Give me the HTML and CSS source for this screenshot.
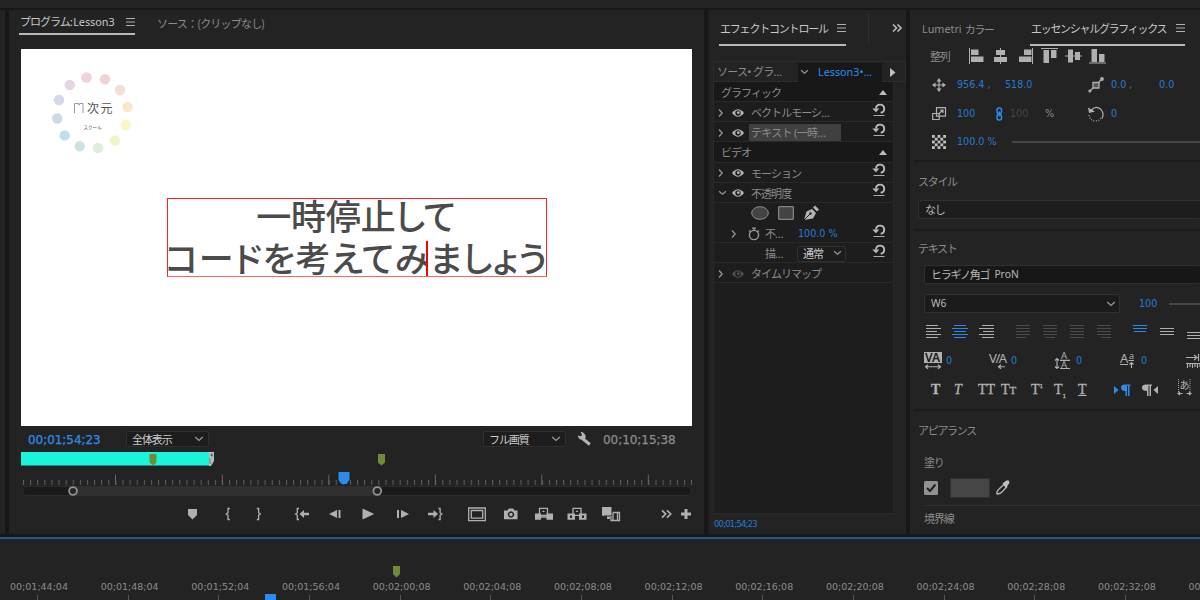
FILE: index.html
```html
<!DOCTYPE html>
<html lang="ja">
<head>
<meta charset="utf-8">
<title>Lesson3</title>
<link rel="stylesheet" href="styles.css">
</head>
<body>
<svg class="defs" width="0" height="0">
  <defs>
    <symbol id="chev" viewBox="0 0 10 6"><path d="M1.2 1 5 4.4 8.8 1" fill="none" stroke="#999" stroke-width="1.3"/></symbol>
    <symbol id="right" viewBox="0 0 6 10"><path d="M1 1.500 4.200 5 1 8.500" fill="none" stroke="#999" stroke-width="1.200"/></symbol>
    <symbol id="menu" viewBox="0 0 9 8"><path d="M0 .5h9M0 4h9M0 7.500h9" stroke="#b0b0b0" stroke-width="1"/></symbol>
    <symbol id="more" viewBox="0 0 11 8"><path d="M1 .5 4.500 4 1 7.500M5.500.5 9 4 5.500 7.500" fill="none" stroke="#b4b4b4" stroke-width="1.700"/></symbol>
    <symbol id="eye" viewBox="0 0 12 8"><path d="M0 4Q6-3.500 12 4 6 11.500 0 4Z" fill="currentColor"/><circle cx="6" cy="4" r="2.700" fill="#1d1d1d"/><circle cx="6.300" cy="3.700" r="1.400" fill="currentColor"/></symbol>
    <symbol id="reset" viewBox="0 0 14 14"><path d="M4 5.500A4.100 4.100 0 1 1 8.700 9.800" fill="none" stroke="#bbb" stroke-width="1.900"/><path d="M.3 5.600h7L4 9.200Z" fill="#bbb"/><path d="M1.500 12.500h11" stroke="#aaa" stroke-width="1"/></symbol>
    <symbol id="up" viewBox="0 0 8 5"><path d="M0 5 4 0 8 5Z" fill="#bbb"/></symbol>
    <symbol id="pin" viewBox="0 0 7 12"><path d="M0 0h7v8L3.500 11.500 0 8Z" fill="#728a36"/></symbol>
  </defs>
</svg>

<div class="topbar"></div>
<main class="workspace">
  <div class="edge"></div>

  <section class="panel program">
    <header class="tabs">
      <div class="tab active"><span class="t-program">プログラム: <span class="lat">Lesson3</span></span><svg width="9" height="8"><use href="#menu"/></svg></div>
      <div class="tab t-source">ソース：(クリップなし)</div>
    </header>

    <div class="monitor">
      <svg class="logo" width="84" height="84" viewBox="50 70 84 84">
        <circle cx="86.500" cy="77.500" r="5.200" fill="#efd3da"/><circle cx="105" cy="79.300" r="5.200" fill="#f2d3d5"/>
        <circle cx="120" cy="90" r="5.200" fill="#f6ddd4"/><circle cx="127.600" cy="107" r="5.200" fill="#f8e7c8"/>
        <circle cx="125.800" cy="125.300" r="5.200" fill="#fbf7c5"/><circle cx="115" cy="140.500" r="5.200" fill="#eef4cc"/>
        <circle cx="98" cy="148" r="5.200" fill="#e0edd8"/><circle cx="79.700" cy="146.200" r="5.200" fill="#cde4de"/>
        <circle cx="64.700" cy="135.400" r="5.200" fill="#c1dfe9"/><circle cx="57.200" cy="118.500" r="5.200" fill="#c9dae9"/>
        <circle cx="59" cy="100" r="5.200" fill="#d5d7ea"/><circle cx="69.700" cy="85" r="5.200" fill="#e4d5e5"/>
        <path d="M74.500 113v-9.500h3.800v1.500M79.500 105v-1.500h3.500V113" fill="none" stroke="#999" stroke-width="1"/>
        <text x="87" y="112.500" class="logo-name">次元</text>
        <text x="83.500" y="128.600" class="logo-sub">スクール</text>
      </svg>
      <div class="caption"><div class="line1">一時停止して</div><div class="line2">コードを考えてみましょう</div><i class="caret"></i></div>
    </div>

    <div class="monitor-bar">
      <span class="time blue">00;01;54;23</span>
      <div class="select"><span>全体表示</span><svg width="10" height="6"><use href="#chev"/></svg></div>
      <div class="select"><span>フル画質</span><svg width="10" height="6"><use href="#chev"/></svg></div>
      <svg width="16" height="16" viewBox="0 0 16 16"><path d="M5.500 7.500 12.800 13.500" stroke="#b4b4b4" stroke-width="3"/><path d="M3.500.8 5 4 4 5.200.8 4.500Q1.500 9 6.500 9 10 7 8 3.500 6.500.8 3.500.8Z" fill="#b4b4b4"/></svg>
      <span class="time">00;10;15;38</span>
    </div>

    <svg class="clipbar" width="671" height="14">
      <path d="M0 0h188v13.500H0Z" fill="#1af5da"/><path d="M188 0h5v9l-3 5h-2Z" fill="#bdbdbd"/><path d="M190 2h1.500v2H190ZM189 6v6" fill="#333" stroke="#777"/>
      <path d="M128.500 2h7v8.500l-3.500 3-3.500-3Z" fill="#728a36"/><path d="M357 2h7v8.500l-3.500 3-3.500-3Z" fill="#728a36"/>
    </svg>
    <svg class="ruler" width="671" height="14" viewBox="21 472 671 14">
      <defs><pattern id="minor" x="23" width="7.107" height="20" patternUnits="userSpaceOnUse"><path d="M0 0h1v20H0Z" fill="#606060"/></pattern></defs>
      <path d="M23 480h669v5H23Z" fill="url(#minor)"/>
      <path d="M115.500 474.500V485M222.300 474.500V485M328.800 474.500V485M435.300 474.500V485M541.800 474.500V485M648.300 474.500V485" stroke="#666"/>
      <path d="M338.500 472h11v8l-3 4h-5l-3-4Z" fill="#2d8ceb"/>
    </svg>
    <svg class="zoombar" width="671" height="12" viewBox="21 485 671 12">
      <rect x="22.500" y="486.500" width="669" height="9" rx="4.500" fill="#1a1a1a" stroke="#2d2d2d"/><path d="M73 486h304v10H73Z" fill="#303030"/>
      <circle cx="73" cy="491" r="3.900" fill="#252525" stroke="#929292" stroke-width="1.800"/><circle cx="377.300" cy="491" r="3.900" fill="#252525" stroke="#929292" stroke-width="1.800"/>
    </svg>

    <div class="transport">
      <svg viewBox="0 0 24 24"><path d="M8 7h9v6l-4.500 4.500L8 13Z"/></svg>
      <svg viewBox="0 0 24 24"><path class="ln" d="M13.800 6.500H12v4.200L10.300 12 12 13.300v4.200h1.800"/></svg>
      <svg viewBox="0 0 24 24"><path class="ln" d="M10.800 6.500h1.800v4.200l1.700 1.300-1.700 1.300v4.200h-1.800"/></svg>
      <svg viewBox="0 0 24 24"><path class="ln" d="M9 6.500H7.300v4.200L5.600 12l1.700 1.300v4.200H9"/><path d="M9.500 12 14 8v2.800h5v2.400h-5V16Z"/></svg>
      <svg viewBox="0 0 24 24"><path d="M6 12l8-4v8ZM15.500 8h2v8h-2Z"/></svg>
      <svg viewBox="0 0 24 24"><path d="M6.500 6.500 18.300 12 6.500 17.500Z"/></svg>
      <svg viewBox="0 0 24 24"><path d="M6 8h2v8H6ZM10 8l8 4-8 4Z"/></svg>
      <svg viewBox="0 0 24 24"><path d="M15 12l-4.500-4v2.800H5v2.400h5.500V16Z"/><path class="ln" d="M15.500 6.500h1.600v4.200l1.700 1.300-1.700 1.300v4.200h-1.600"/></svg>
      <svg viewBox="0 0 24 24"><path class="ln" d="M3.700 6h16.600v12.600H3.700ZM6.300 8.500h11.400v7.600H6.300Z"/></svg>
      <svg viewBox="0 0 24 24"><path fill-rule="evenodd" d="M5 8.500h3.500L9.800 6.500h4.400l1.300 2H18.500v8.800H5ZM12 9.300a3.200 3.200 0 1 0 .01 0Z"/><circle cx="12" cy="12.500" r="1.700"/></svg>
      <svg viewBox="0 0 24 24"><path class="ln" d="M7.500 6.300h8v7h-8ZM15 15H8"/><path d="M3 11.500h6v6.200H3ZM14.500 11.500H21v6.200h-6.500ZM10 10l1.500-1.800L13 10Z"/></svg>
      <svg viewBox="0 0 24 24"><path class="ln" d="M8 6.300h8v7H8Z"/><path fill-rule="evenodd" d="M2.500 11.500H10v6.200H2.500ZM5 13.500v2.500h2v-2.500ZM14 11.500h7.500v6.200H14ZM17 13.500v2.500h2v-2.500ZM10.500 10 12 8.200l1.500 1.800Z"/></svg>
      <svg viewBox="0 0 24 24"><path d="M3 5h9.500v8.500H3ZM8 14.500h3V17H8Z"/><path class="ln" d="M4.500 5v9M14 10.500h6.500v8H12v-4.500M14 10.500v8M18.500 10.500v8" stroke-width="1"/></svg>
      <svg viewBox="0 0 24 24"><path class="ln chevrons" d="M7 8.300 10.700 12 7 15.700M12 8.300 15.700 12 12 15.700"/></svg>
      <svg viewBox="0 0 24 24"><path d="M10.500 7h3v3.500H17v3h-3.500V17h-3v-3.500H7v-3h3.500Z"/></svg>
    </div>
  </section>

  <section class="panel effects">
    <header class="tabs">
      <div class="tab active"><span>エフェクトコントロール</span><svg width="9" height="8"><use href="#menu"/></svg></div>
      <i class="divider"></i>
      <svg class="overflow" width="11" height="8"><use href="#more"/></svg>
    </header>
    <div class="sourcebar">
      <span class="src">ソース• グラ…</span>
      <span class="clip"><svg width="9" height="6"><use href="#chev"/></svg><span class="lat blue">Lesson3•…</span></span>
      <svg width="6" height="9"><path d="M0 0 5.500 4.500 0 9Z" fill="#c0c0c0"/></svg>
    </div>
    <div class="fx-list">
      <div class="fx head"><span>グラフィック</span><svg width="8" height="5"><use href="#up"/></svg></div>
      <div class="fx"><svg width="6" height="10"><use href="#right"/></svg><svg class="eye" width="12" height="8"><use href="#eye"/></svg><span>ベクトルモーシ…</span><svg class="reset" width="14" height="14"><use href="#reset"/></svg></div>
      <div class="fx"><svg width="6" height="10"><use href="#right"/></svg><svg class="eye" width="12" height="8"><use href="#eye"/></svg><span class="selected">テキスト (一時…</span><svg class="reset" width="14" height="14"><use href="#reset"/></svg></div>
      <div class="fx head"><span>ビデオ</span><svg width="8" height="5"><use href="#up"/></svg></div>
      <div class="fx"><svg width="6" height="10"><use href="#right"/></svg><svg class="eye" width="12" height="8"><use href="#eye"/></svg><span>モーション</span><svg class="reset" width="14" height="14"><use href="#reset"/></svg></div>
      <div class="fx"><svg width="9" height="6"><use href="#chev"/></svg><svg class="eye" width="12" height="8"><use href="#eye"/></svg><span>不透明度</span><svg class="reset" width="14" height="14"><use href="#reset"/></svg></div>
      <div class="fx masks">
        <svg width="18" height="14"><ellipse cx="9" cy="7" rx="8.300" ry="6.300" fill="#434343" stroke="#909090"/></svg>
        <svg width="16" height="14"><path d="M.7.7h14.600v12.600H.7Z" fill="#434343" stroke="#999"/></svg>
        <svg width="16" height="16"><path d="M1 15 3.500 6.500 9 4l4 4-3 5.500Z" fill="#b4b4b4"/><path d="m10 2.500 2-2 4 4-2 2Z" fill="#b4b4b4"/><path d="M1 15 7 9" stroke="#222"/><circle cx="7.500" cy="8.500" r="1.200" fill="#222"/></svg>
      </div>
      <div class="fx prop"><svg width="6" height="10"><use href="#right"/></svg><svg width="12" height="14"><circle cx="6" cy="8" r="4.600" fill="none" stroke="#999" stroke-width="1.400"/><path d="M4 1.200h4M6 1v3M1 3.500l2 1.500M11 3.500 9 5" stroke="#999" stroke-width="1.300"/></svg><span>不…</span><span class="num blue">100.0 %</span><svg class="reset" width="14" height="14"><use href="#reset"/></svg></div>
      <div class="fx prop"><i></i><i></i><span>描…</span><span class="select mini"><span>通常</span><svg width="9" height="6"><use href="#chev"/></svg></span><svg class="reset" width="14" height="14"><use href="#reset"/></svg></div>
      <div class="fx"><svg width="6" height="10"><use href="#right"/></svg><svg class="eye off" width="12" height="8"><use href="#eye"/></svg><span>タイムリマップ</span></div>
    </div>
    <div class="fx-time num blue">00;01;54;23</div>
  </section>

  <section class="panel graphics">
    <header class="tabs">
      <div class="tab"><span class="lat">Lumetri</span> カラー</div>
      <div class="tab active"><span>エッセンシャルグラフィックス</span><svg width="9" height="8"><use href="#menu"/></svg></div>
    </header>
    <div class="row align">
      <span>整列</span>
      <svg viewBox="0 0 18 16"><path d="M1 0h1v16H1ZM3 1.500h7.500v5.500H3ZM3 8.500h12.500V14H3Z"/></svg>
      <svg viewBox="0 0 18 16"><path d="M8 0h1v16H8ZM4 2h9v5H4ZM2 9h13v5H2Z"/></svg>
      <svg viewBox="0 0 18 16"><path d="M15 0h1v16h-1ZM7 1.500h7.500v5.500H7ZM2 8.500h12.500V14H2Z"/></svg>
      <svg viewBox="0 0 18 16"><path d="M0 0h17v1H0ZM2.500 2H8v13H2.500ZM10 2h5.500v8H10Z"/></svg>
      <svg viewBox="0 0 18 16"><path d="M0 7.500h17v1H0ZM3 1.500h5v13H3ZM10 4h5v8h-5Z"/></svg>
      <svg viewBox="0 0 18 16"><path d="M0 14.500h17v1H0ZM2.500 1H8v13H2.500ZM10 6h5.500v8H10Z"/></svg>
    </div>
    <div class="row pos">
      <svg viewBox="0 0 14 14"><path class="ln" d="M7 2v10M2 7h10"/><path d="M7 0 9.500 3.500h-5ZM7 14 4.500 10.500h5ZM0 7l3.500-2.500v5ZM14 7l-3.500 2.500v-5Z"/></svg>
      <span class="num blue">956.4 ,</span><span class="num blue">518.0</span>
      <svg viewBox="0 0 16 16"><path class="ln" d="M2 14 14 2"/><path class="knot" d="M5 5.500h6v5.500H5Z"/><circle cx="1.800" cy="14" r="1.500"/><circle cx="14" cy="2" r="1.900"/></svg>
      <span class="num blue">0.0 ,</span><span class="num blue">0.0</span>
    </div>
    <div class="row scale">
      <svg viewBox="0 0 14 14"><path class="ln" d="M4.500.7h9v8.500h-9ZM.7 6.500h6.500v6H.7Z"/><path class="ln" d="M6.500 7 11 3M8 3h3v3"/></svg>
      <span class="num blue">100</span>
      <svg viewBox="0 0 7 14"><rect x="1" y="1" width="4.500" height="5.500" rx="2" fill="none" stroke="#2d8ceb" stroke-width="1.500"/><rect x="1" y="7.500" width="4.500" height="5.500" rx="2" fill="none" stroke="#2d8ceb" stroke-width="1.500"/><path d="M3.300 4.500v5" stroke="#2d8ceb" stroke-width="1.200"/></svg>
      <span class="num dim">100</span><span class="num">%</span>
      <svg viewBox="0 0 16 16"><path class="ln" d="M3.500 4Q8-.8 13 3.500 16.500 8 14 12.500"/><path d="M0 1.500 1 7l6-1.500Z"/><path class="ln" d="M1 9q1 6 7 6 3 0 5-3" stroke-dasharray="1 1.500"/></svg>
      <span class="num blue">0</span>
    </div>
    <div class="row opacity">
      <svg viewBox="0 0 13 13"><defs><pattern id="chk" width="5.200" height="5.200" patternUnits="userSpaceOnUse"><path d="M0 0h2.600v2.600H0ZM2.600 2.600h2.600v2.600H2.600Z" fill="#c0c0c0"/></pattern></defs><path class="checker" d="M0 0h13v13H0Z"/></svg>
      <span class="num blue">100.0 %</span><i class="track"></i>
    </div>
    <div class="group"><h3>スタイル</h3><div class="field style-field">なし</div></div>
    <div class="group type">
      <h3>テキスト</h3>
      <div class="field font-field">ヒラギノ角ゴ <span class="lat">ProN</span></div>
      <div class="weight"><div class="field"><span class="lat">W6</span><svg width="10" height="6"><use href="#chev"/></svg></div><span class="num blue">100</span><i class="track"></i></div>
      <div class="para">
        <svg viewBox="0 0 16 14"><path d="M1 .5h12M1 3.500h15M1 6.500h11M1 9.500h15M1 12.500h12"/></svg>
        <svg class="on" viewBox="0 0 16 14"><path d="M2 .5h12M0 3.500h16M2 6.500h12M0 9.500h16M2 12.500h12"/></svg>
        <svg viewBox="0 0 16 14"><path d="M3 .5h12M0 3.500h15M4 6.500h11M0 9.500h15M3 12.500h12"/></svg>
        <svg class="off" viewBox="0 0 16 14"><path d="M1 .5h14M1 3.500h14M1 6.500h14M1 9.500h14M1 12.500h10"/></svg>
        <svg class="off" viewBox="0 0 16 14"><path d="M1 .5h14M1 3.500h14M1 6.500h14M1 9.500h14M3 12.500h10"/></svg>
        <svg class="off" viewBox="0 0 16 14"><path d="M1 .5h14M1 3.500h14M1 6.500h14M1 9.500h14M1 12.500h14"/></svg>
        <svg class="off" viewBox="0 0 16 14"><path d="M1 .5h14M1 3.500h14M1 6.500h14M1 9.500h14M5 12.500h10"/></svg>
        <svg class="on" viewBox="0 0 16 14"><path d="M1 .5h14M1 3.500h14M2 6.500h12"/></svg>
        <svg viewBox="0 0 16 14"><path d="M1 3.500h14M1 6.500h14M1 9.500h14"/></svg>
        <svg viewBox="0 0 16 14"><path d="M1 7.500h14M1 10.500h14M1 13.500h14"/></svg>
      </div>
      <div class="metrics">
        <svg viewBox="0 0 20 18"><path d="M0 0h18v11H0Z"/><text x="1" y="9.700" class="va inv">VA</text><path class="ln" d="M2 14.700h14M4 12.700l-2.500 2L4 16.700M14 12.700l2.500 2-2.500 2"/></svg><span class="num blue">0</span>
        <svg viewBox="0 0 20 18"><text x="0" y="10.500" class="va wide tight">V/A</text><path class="ln" d="M16 14.700H9.500M12 12.700l-2.500 2 2.500 2"/></svg><span class="num blue">0</span>
        <svg viewBox="0 0 20 18"><text x="7" y="7" class="va mid">A</text><text x="7" y="15.500" class="va mid">A</text><path class="ln" d="M6 8.300h10M6 16.500h10M3 7v9M1 8.500 3 6.500l2 2M1 14.500l2 2 2-2"/></svg><span class="num blue">0</span>
        <svg viewBox="0 0 20 18"><text x="1" y="10.500" class="va wide">A</text><text x="10" y="7" class="small">a</text><path class="ln" d="M1 12.500h8M9.500 8.500H15M12.500 16v-5M10.500 12.500l2-2 2 2"/></svg><span class="num blue">0</span>
        <svg viewBox="0 0 20 18"><path class="ln" d="M0 5.500h10M8 3l3 2.500L8 8M12.500 2v7M0 11.500h15M1.500 11v5M4 11v4M6.500 11v5M9 11v4M11.500 11v5M14 11v4"/></svg>
      </div>
      <div class="styles">
        <b>T</b><em>T</em><span>TT</span><span>T<small>T</small></span><span>T<sup>1</sup></span><span>T<sub>1</sub></span><u>T</u>
        <svg class="on" viewBox="0 0 18 14"><path d="M1 3l4.500 4L1 11ZM12 1.500h5.500v1.200h-1V13H15V2.700h-1V13h-1.500V8Q8 8 8 4.800q0-3.300 4-3.300Z"/></svg>
        <svg viewBox="0 0 18 14"><path d="M17 3 12.500 7l4.500 4ZM5 1.500h6v1.200h-1V13H8.500V2.700h-1V13H6V8Q1 8 1 4.800q0-3.300 4-3.300Z"/></svg>
        <svg viewBox="0 0 16 18"><text x="2.500" y="9.500" class="kana">あ</text><path d="M1.500 0v13M13 0v13" stroke="#aaa" stroke-dasharray="1 1"/><path class="ln thin" d="M5.500 14.500H1M3 12.800l-2 1.700 2 1.700M9.500 14.500H14M12 12.800l2 1.700-2 1.700"/></svg>
      </div>
    </div>
    <div class="group look">
      <h3>アピアランス</h3>
      <p>塗り</p>
      <div class="fill">
        <svg width="14" height="14"><rect width="14" height="14" rx="1.500" fill="#929292"/><path d="m3 7 3 3 5.500-6.500" fill="none" stroke="#202020" stroke-width="2"/></svg>
        <i class="swatch"></i>
        <svg width="16" height="16"><path d="M2 14q-.5-3 2-5l5-4.500 2.500 2.500L7 12q-2 2-5 2Z" fill="#222" stroke="#b4b4b4" stroke-width="1.300"/><path d="m7.500 3 1.500-.5L11 .8Q14-.5 14.500 2q0 1.500-2 3.500l-.5 2-1 1Z" fill="#c0c0c0"/></svg>
      </div>
      <p class="stroke-row">境界線</p>
    </div>
  </section>
</main>

<footer class="timeline">
  <svg class="tl-marker" width="7" height="12"><use href="#pin"/></svg>
  <div class="labels">
    <span>00;01;44;04</span><span>00;01;48;04</span><span>00;01;52;04</span><span>00;01;56;04</span><span>00;02;00;08</span><span>00;02;04;08</span><span>00;02;08;08</span><span>00;02;12;08</span><span>00;02;16;08</span><span>00;02;20;08</span><span>00;02;24;08</span><span>00;02;28;08</span><span>00;02;32;08</span><span>00</span>
  </div>
  <i class="playhead"></i>
</footer>
</body>
</html>
```
FILE: styles.css
```css
* { box-sizing: border-box; }
body {
  margin: 0; width: 1200px; height: 600px; overflow: hidden;
  background: #171717; color: #8c8c8c;
  font: 11px/20px "Noto Sans CJK JP", sans-serif;
  letter-spacing: -1.2px; white-space: nowrap;
}
svg { display: block; flex: none; overflow: visible; }
i { display: block; }
h3, p { margin: 0; font: inherit; }
.defs { position: absolute; }
.lat { font-family: "Noto Sans", sans-serif; font-size: 10.8px; letter-spacing: 0; }
.num { font-family: "DejaVu Sans", sans-serif; font-size: 9.6px; letter-spacing: 0; }
.blue { color: #2d8ceb; }
.num.blue { color: #277bcf; }
.dim { color: #454545; }
.ln { fill: none; stroke: #b0b0b0; stroke-width: 1.3; }

.topbar { height: 8px; background: #232323; }
.workspace { display: flex; gap: 4px; height: 529px; padding-top: 2px; overflow: hidden; }
.edge { width: 5px; height: 524px; background: #232323; flex: none; }
.panel { height: 524px; background: #232323; overflow: hidden; flex: none; }
.tabs { display: flex; }
.tab { display: flex; align-items: center; }
.tab.active { color: #c8c8c8; border-bottom: 2px solid #b8b8b8; justify-content: space-between; }

/* Program monitor */
.program { width: 695px; }
.program .tabs { height: 39px; padding-left: 10px; gap: 22px; }
.program .tab { height: 25px; }
.program .active { width: 116px; padding-left: 1px; }
.t-program { letter-spacing: -1px; }
.t-source { letter-spacing: -.8px; }
.monitor { position: relative; width: 671px; height: 377px; margin-left: 12px; background: #fff; }
.logo { position: absolute; left: 29px; top: 21px; }
.logo-name { font-size: 12px; letter-spacing: 1.5px; fill: #555; }
.logo-sub { font-size: 4.5px; letter-spacing: 0; fill: #555; }
.caption {
  position: absolute; left: 146px; top: 149px; width: 380px; height: 79px;
  border: 1px solid #f00; border-color: #f22 #f22 #f66;
  color: #4b4b4b; font-size: 35px; line-height: 42px; font-weight: 500;
  text-align: center; font-feature-settings: "palt";
}
.line1 { margin: -5px 2px 0 0; letter-spacing: -.2px; }
.line2 { margin: 0 -4px 0 -5px; letter-spacing: .7px; }
.caret { position: absolute; left: 258px; top: 42px; width: 2px; height: 35px; background: #f00; }
.monitor-bar { display: grid; grid-template-columns: 98px 357px 94px 26px 90px; height: 26px; padding-left: 19px; align-items: center; }
.time { font: 12px/20px "DejaVu Sans", sans-serif; letter-spacing: -.05px; padding-top: 1px; color: #8c8c8c; -webkit-text-stroke: .25px; }
.time.blue { color: #2d8ceb; }
.select { display: flex; width: 83px; height: 16px; align-items: center; justify-content: space-between; padding: 0 4px 1px 5px; border: 1px solid #303030; border-radius: 2px; background: #1d1d1d; color: #ccc; letter-spacing: -1.1px; }
.clipbar, .ruler, .zoombar { margin-left: 12px; }
.ruler { margin-top: 6px; }
.zoombar { margin-top: -1px; }
.transport { display: grid; grid-template-columns: 36px 30px 44px 33px 33px 35px 32px 42px 34px 33px 33px 34px 56px 19px 24px; padding: 5px 0 0 171px; }
.transport svg { width: 24px; height: 24px; fill: #b0b0b0; }
.transport .ln { fill: none; }
.chevrons { stroke-width: 1.7; }

/* Effect controls */
.effects { width: 198px; border-left: 1px solid #1d1d1d; }
.effects .tabs { height: 51px; padding-left: 10px; align-items: flex-start; }
.effects .tab { width: 127px; height: 36px; padding: 2px 0 0 1px; }
.divider { width: 1px; height: 31px; margin: 3px 0 0 22px; background: #303030; }
.overflow { margin: 14px 0 0 23px; }
.sourcebar { display: grid; grid-template-columns: 84px 92px 10px; align-items: center; height: 21px; margin-left: 4px; border: 1px solid #2c2c2c; }
.sourcebar .src { padding-left: 3px; letter-spacing: -.7px; font-family: "Noto Sans", "Noto Sans CJK JP", sans-serif; }
.clip { display: flex; align-items: center; height: 19px; width: 84px; padding-left: 2px; gap: 9px; background: #181818; }
.fx-list { height: 432px; margin-left: 4px; width: 181px; background: #1d1d1d; border: 1px solid #292929; border-width: 0 1px 1px; }
.fx { display: grid; grid-template-columns: 14px 18px 122px 14px; height: 20.15px; padding: 2px 0 0 4px; align-items: center; border-bottom: 1px solid #292929; }
.fx > span { line-height: 17px; padding-left: 1px; letter-spacing: -.95px; font-family: "Noto Sans", "Noto Sans CJK JP", sans-serif; }
.fx > .num { font-family: "DejaVu Sans", sans-serif; letter-spacing: 0; }
.fx.head { grid-template-columns: 159px 8px; padding-left: 6px; background: #181818; }
.eye { color: #b4b4b4; }
.eye.off { color: #505050; }
.reset { margin-top: -6px; }
.fx .selected { width: 92px; height: 17px; margin-left: -1px; padding-left: 2px; background: #404040; letter-spacing: -.7px; }
.fx.masks { display: flex; gap: 9px; padding-left: 37px; border-color: #1d1d1d; }
.fx.prop { grid-template-columns: 17px 16px 33px 75px 14px; padding-left: 17px; }
.fx .select.mini { width: 49px; height: 16px; padding: 0 3px 1px 5px; letter-spacing: -1px; }
.fx-time { padding-left: 5px; font-size: 8.4px; letter-spacing: -.75px; line-height: 21px; }

/* Essential graphics */
.graphics { width: 290px; }
.graphics .tabs { height: 36px; padding-left: 12px; }
.graphics .tab { height: 36px; padding-top: 2px; }
.graphics .tab:first-child { width: 108px; gap: 3px; letter-spacing: -1.5px; }
.graphics .tab.active { width: 155px; padding-left: 1px; letter-spacing: -1.3px; }
.graphics .row { display: grid; align-items: center; height: 28.6px; padding-left: 22px; }
.graphics .row svg { height: 14px; fill: #b0b0b0; }
.graphics .row .ln { fill: none; stroke-width: 1.2; }
.graphics .row .knot { fill: #555; stroke: #b0b0b0; stroke-width: 1.3; }
.graphics .row.align { grid-template-columns: 38px 24px 25px 24px 24px 24px 20px; height: 20px; margin-bottom: 5px; padding-left: 20px; }
.graphics .align svg { height: 16px; width: 18px; }
.row .checker { fill: url(#chk); }
.pos { grid-template-columns: 25px 48px 83px 23px 48px 40px; }
.scale { grid-template-columns: 25px 39px 14px 35px 43px 23px 40px; }
.graphics .pos svg:nth-of-type(2), .graphics .scale svg:nth-of-type(3) { width: 16px; height: 16px; }
.opacity { grid-template-columns: 25px 55px 200px; }
.track { height: 2px; background: #464646; }
.group { border-top: 2px solid #1b1b1b; padding: 9px 0 0 4px; margin-left: 4px; }
.group h3, .group p { line-height: 20px; }
.row.opacity { margin-bottom: 3px; }
.group h3 { letter-spacing: -1.3px; }
.field { display: flex; align-items: center; height: 19px; border: 1px solid #303030; border-right: 0; border-radius: 2px; background: #1b1b1b; color: #b8b8b8; padding-left: 6px; line-height: 17px; }
.style-field { margin-top: 9px; height: 19px; background: #1d1d1d; }
.group.type { margin-top: 10px; height: 180px; padding-top: 7px; }
.font-field { margin: 7px 0 10px 6px; background: #171717; gap: 5px; }
.font-field .lat, .weight .lat { font-size: 10.3px; }
.weight { display: grid; grid-template-columns: 215px 30px 60px; align-items: center; padding-left: 6px; }
.weight .field { width: 196px; justify-content: space-between; padding-right: 3px; border-right: 1px solid #303030; }
.para { display: grid; grid-template-columns: 27px 27px 36px 27px 27px 27px 36px 27px 27px 27px; padding: 11px 0 0 7px; }
.para svg { width: 16px; height: 14px; fill: none; stroke: #b0b0b0; stroke-width: 1.1; }
.para .on { stroke: #2d8ceb; }
.para .off { stroke: #4b4b4b; }
.metrics { display: grid; grid-template-columns: 22px 43px 22px 43px 22px 43px 22px 43px 20px; align-items: center; padding: 12px 0 0 6px; }
.metrics svg { width: 20px; height: 18px; fill: #b0b0b0; }
.metrics .ln { fill: none; stroke-width: 1.15; }
.metrics svg:last-child { margin-left: 2px; }
.va { font: 12px "Noto Sans", sans-serif; letter-spacing: 0; }
.va.inv { fill: #181818; font-weight: 600; letter-spacing: -.2px; }
.va.wide { font-size: 13px; }
.va.tight { letter-spacing: -1.4px; }
.va.mid { font-size: 9.5px; }
.small { font: 9px "Noto Sans", sans-serif; }
.styles { display: grid; grid-template-columns: 24px 24px 23px 30px 23px 24px 36px 27px 36px 20px; padding: 9px 0 0 12px; align-items: center; font: 14px/20px "Liberation Serif", serif; color: #b4b4b4; letter-spacing: 0; -webkit-text-stroke: .3px; }
.styles b { padding-left: 1px; }
.styles small { font-size: 11px; }
.styles sup, .styles sub { font-size: 7px; line-height: 0; }
.styles svg { width: 18px; height: 14px; fill: #b0b0b0; }
.styles svg.on { fill: #2d8ceb; margin-left: -1px; }
.styles svg:last-child { width: 16px; height: 18px; margin-top: -3px; }
.styles .thin { fill: none; stroke-width: 1.1; }
.kana { font: 10px "Noto Sans CJK JP", sans-serif; }
.group.look { padding-top: 9px; }
.look p { margin: 12px 0 0 6px; }
.fill { display: grid; grid-template-columns: 26px 45px 16px; align-items: center; padding: 6px 0 0 6px; }
.swatch { width: 40px; height: 20px; background: #464646; border: 1px solid #303030; }
.look .stroke-row { margin-top: 7px; padding-top: 2px; border-top: 1px solid #303030; letter-spacing: -1.1px; }

/* Timeline */
.timeline { position: relative; height: 63px; border-top: 2px solid #24568f; background: #232323; overflow: hidden; }
.tl-marker { margin: 27px 0 0 393px; }
.labels { display: flex; height: 26px; margin-top: -2px; padding-left: 10px; overflow: hidden; }
.labels span { flex: 0 0 90.66px; height: 26px; padding-top: 1px; font: 9.5px/19px "DejaVu Sans", sans-serif; letter-spacing: 0; background: linear-gradient(#555, #555) 27px 100%/1px 7px no-repeat; }
.playhead { position: absolute; left: 265px; top: 55px; width: 11px; height: 6px; background: #2d8ceb; }
```
